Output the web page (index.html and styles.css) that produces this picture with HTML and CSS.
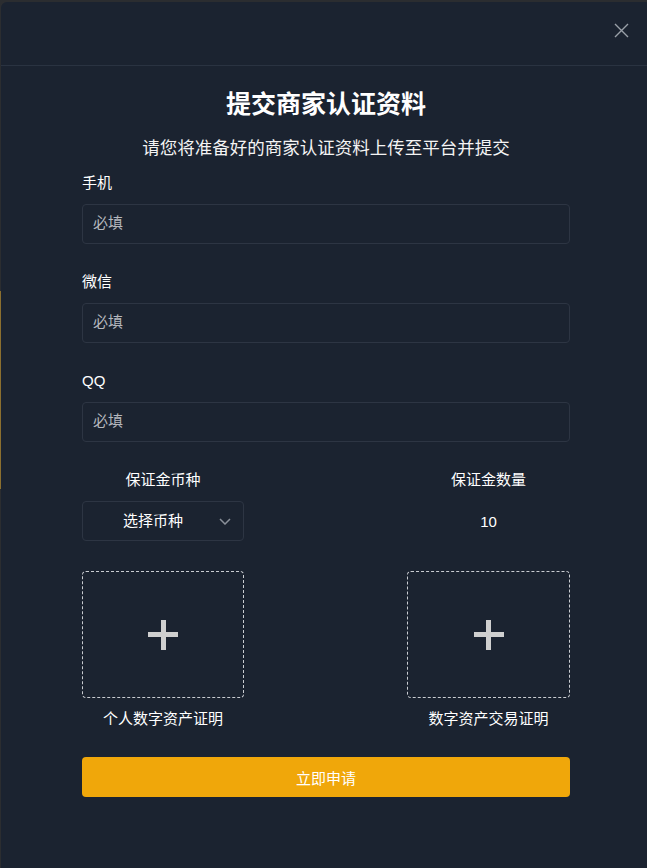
FILE: index.html
```html
<!DOCTYPE html>
<html lang="zh-CN">
<head>
<meta charset="utf-8">
<title>提交商家认证资料</title>
<link rel="stylesheet" href="styles.css">
</head>
<body>
<div class="edge-line"></div>
<div class="modal">
  <div class="modal-header">
    <svg class="close" width="15" height="15" viewBox="0 0 15 15"><path d="M1 1L14 14M14 1L1 14" stroke="#9aa0a8" stroke-width="1.4" fill="none"/></svg>
  </div>
  <div class="modal-body">
    <h1 class="title">提交商家认证资料</h1>
    <p class="subtitle">请您将准备好的商家认证资料上传至平台并提交</p>

    <div class="field">
      <div class="label">手机</div>
      <div class="input">必填</div>
    </div>
    <div class="field">
      <div class="label">微信</div>
      <div class="input">必填</div>
    </div>
    <div class="field">
      <div class="label">QQ</div>
      <div class="input">必填</div>
    </div>

    <div class="pair">
      <div class="col">
        <div class="label center">保证金币种</div>
        <div class="select">
          <span>选择币种</span>
          <svg class="chev" width="12" height="7" viewBox="0 0 12 7"><path d="M1 1L6 6L11 1" stroke="#8a9099" stroke-width="1.5" fill="none"/></svg>
        </div>
      </div>
      <div class="col right">
        <div class="label center">保证金数量</div>
        <div class="amount">10</div>
      </div>
    </div>

    <div class="uploads">
      <div class="col">
        <div class="upload"><span class="plus"></span></div>
        <div class="caption">个人数字资产证明</div>
      </div>
      <div class="col right">
        <div class="upload"><span class="plus"></span></div>
        <div class="caption">数字资产交易证明</div>
      </div>
    </div>

    <button class="submit">立即申请</button>
  </div>
</div>
</body>
</html>
```

FILE: styles.css
```css
html, body {
  margin: 0;
  padding: 0;
}
body {
  background: #2b2d30;
  width: 647px;
  height: 868px;
  overflow: hidden;
  position: relative;
  font-family: "Liberation Sans", "Noto Sans CJK SC", sans-serif;
  color: #ffffff;
}
.edge-line {
  position: absolute;
  left: 0;
  top: 291px;
  width: 1px;
  height: 198px;
  background: #8b6f2f;
}
.modal {
  margin: 2px 0 0 1px;
  width: 650px;
  height: 866px;
  background: #1b2330;
  border-radius: 6px 6px 0 0;
}
.modal-header {
  border-bottom: 1px solid #2a3341;
  display: flex;
  justify-content: flex-end;
  align-items: flex-start;
  padding: 21px 22px 0 0;
  box-sizing: border-box;
  height: 64px;
}
.close { display: block; }
.modal-body {
  padding: 21px 81px 0 81px;
}
.title {
  margin: 0;
  font-size: 25px;
  line-height: 34px;
  font-weight: 700;
  text-align: center;
}
.subtitle {
  margin: 14px 0 0;
  font-size: 17.5px;
  line-height: 26px;
  text-align: center;
  color: #f4f4f4;
}
.field {
  margin-top: 12px;
}
.field + .field {
  margin-top: 28px;
}
.label {
  font-size: 15px;
  line-height: 20px;
  color: #ffffff;
}
.label.center { text-align: center; }
.input {
  margin-top: 11px;
  height: 40px;
  box-sizing: border-box;
  border: 1px solid #2d3543;
  border-radius: 4px;
  padding: 0 10px 2px;
  display: flex;
  align-items: center;
  font-size: 15px;
  line-height: 20px;
  color: #b4b7bd;
}
.pair, .uploads {
  display: flex;
  justify-content: space-between;
}
.pair { margin-top: 28px; }
.col { width: 162px; }
.col.right { width: 163px; }
.select {
  position: relative;
  margin-top: 11px;
  height: 40px;
  box-sizing: border-box;
  border: 1px solid #2d3543;
  border-radius: 4px;
  padding-right: 20px;
  display: flex;
  align-items: center;
  justify-content: center;
  font-size: 15px;
  line-height: 20px;
  color: #ffffff;
}
.chev {
  position: absolute;
  right: 12px;
  top: 16px;
}
.amount {
  margin-top: 11px;
  height: 40px;
  display: flex;
  align-items: center;
  justify-content: center;
  font-size: 15px;
}
.uploads { margin-top: 30px; }
.upload {
  height: 127px;
  box-sizing: border-box;
  border: 1px dashed #c9ccd1;
  border-radius: 4px;
  display: flex;
  align-items: center;
  justify-content: center;
}
.plus {
  width: 30px;
  height: 30px;
  display: block;
  background:
    linear-gradient(#cfcfcf, #cfcfcf) center / 30px 5px no-repeat,
    linear-gradient(#cfcfcf, #cfcfcf) center / 5px 30px no-repeat;
}
.caption {
  margin-top: 11px;
  font-size: 15px;
  line-height: 20px;
  text-align: center;
}
.submit {
  display: block;
  width: 100%;
  margin-top: 28px;
  height: 40px;
  border: 0;
  border-radius: 4px;
  background: #f0a70a;
  color: #ffffff;
  font-family: "Liberation Sans", "Noto Sans CJK SC", sans-serif;
  font-size: 15px;
}
```
